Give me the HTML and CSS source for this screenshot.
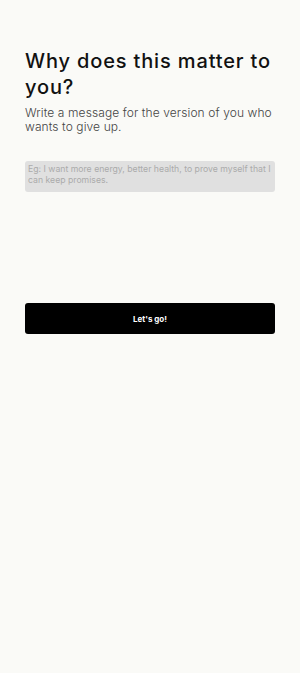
FILE: index.html
```html
<!DOCTYPE html>
<html lang="en">

<head>
    <meta charset="UTF-8">
    <meta name="viewport" content="width=device-width, initial-scale=1.0">
    <title>Why does this matter</title>
    <link rel="stylesheet" href="styles.css">
</head>

<body>
    <div class="container">
        <h1 class="title">Why does this matter to you?</h1>
        <p class="subtitle">Write a message for the version of you who wants to give up.</p>
        <textarea class="message" placeholder="Eg: I want more energy, better health, to prove myself that I can keep promises."></textarea>
        <button class="go-button">Let's go!</button>
    </div>
</body>

</html>
```

FILE: styles.css
```css
body {
    margin: 0;
    background-color: #fafaf7;
    font-family: "Inter", "Roboto", sans-serif;
}

.container {
    padding: 48px 25px 0;
}

.title {
    margin: 0;
    font-size: 20px;
    font-weight: 500;
    line-height: 26px;
    letter-spacing: 0.85px;
    color: #111;
}

.subtitle {
    margin: 6px 0 0;
    font-size: 12px;
    font-weight: 300;
    line-height: 14px;
    letter-spacing: 0.1px;
    color: #444;
}

.message {
    display: block;
    box-sizing: border-box;
    width: 100%;
    height: 31px;
    margin-top: 27px;
    padding: 3px 3px;
    border: none;
    border-radius: 3px;
    background-color: #e0e0e0;
    font-family: "Inter", "Roboto", sans-serif;
    font-size: 8.7px;
    line-height: 11px;
    color: #333;
    resize: none;
}

.message::placeholder {
    color: #ababab;
}

.go-button {
    display: block;
    width: 100%;
    height: 31px;
    margin-top: 111px;
    border: none;
    border-radius: 3px;
    background-color: #000;
    color: #fff;
    font-family: "Inter", "Roboto", sans-serif;
    font-size: 8px;
    font-weight: 700;
    cursor: pointer;
}
```
